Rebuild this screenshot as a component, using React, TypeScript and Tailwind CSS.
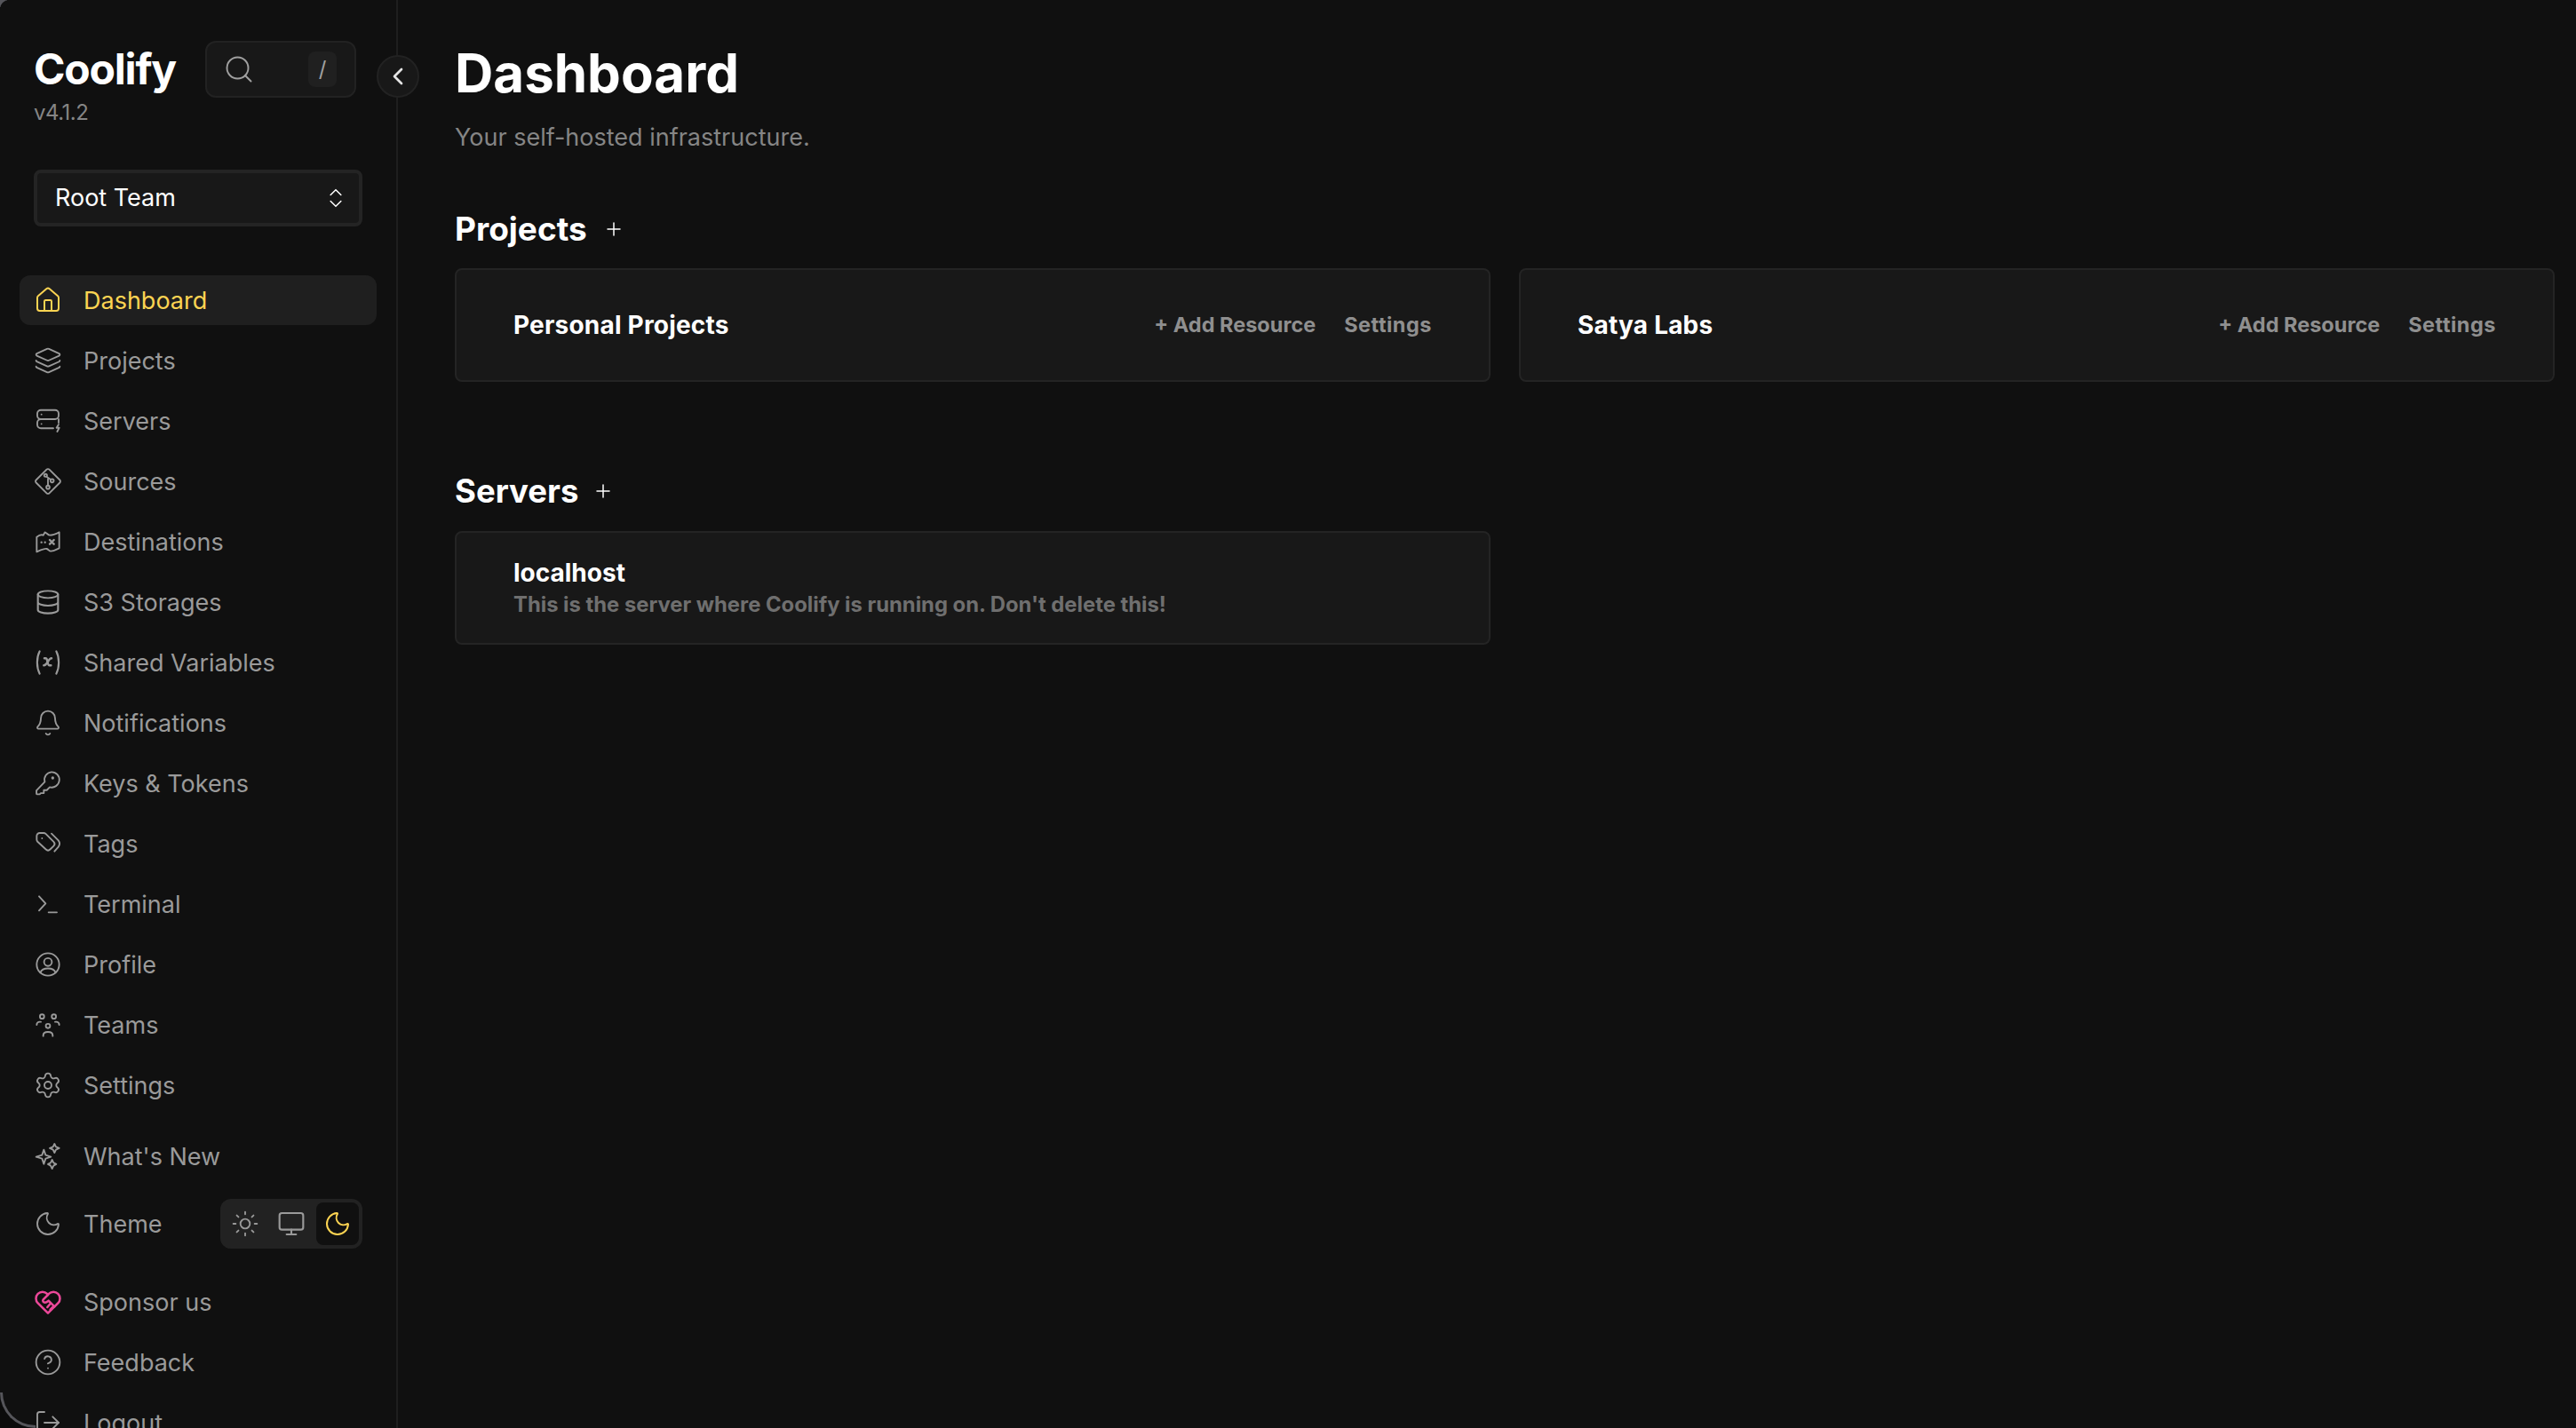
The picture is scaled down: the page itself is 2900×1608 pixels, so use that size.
import React from "react";
import { Search, ChevronLeft, ChevronsUpDown, House, Layers, Bell, Settings, Sun, Moon, Monitor, CircleHelp, Plus, LogOut } from "lucide-react";

function Ic({ children }: { children: React.ReactNode }) {
  return (
    <svg viewBox="0 0 24 24" fill="none" stroke="currentColor" strokeWidth={1.4} strokeLinecap="round" strokeLinejoin="round" className="w-8 h-8">
      {children}
    </svg>
  );
}

const ServersI = () => (
  <Ic>
    <path d="M6 2.800h12a3 3 0 0 1 3 3v1.700a3 3 0 0 1-3 3H6a3 3 0 0 1-3-3V5.800a3 3 0 0 1 3-3Z" />
    <path d="M6 10.500a3 3 0 0 0-3 3v1.700a3 3 0 0 0 3 3h10.500M21 10.500v3" />
    <path d="M21 15l-1.800 2.800h2.300L19.800 21" />
    <path d="M6.500 6.500h.01M6.500 14.500h.01" />
  </Ic>
);
const SourcesI = () => (
  <Ic>
    <path d="M1.500 12c0-.4.200-.8.500-1.100L10.900 2c.6-.6 1.600-.6 2.200 0l8.900 8.900c.6.600.6 1.600 0 2.200L13.100 22c-.6.600-1.600.6-2.200 0L2 13.100c-.3-.3-.5-.7-.5-1.100Z" />
    <circle cx="12" cy="17" r="1.400" />
    <circle cx="10" cy="7" r="1.200" />
    <circle cx="15.500" cy="11.500" r="1.400" />
    <path d="M12 15.500V10M10.800 8l3.500 2.500" />
  </Ic>
);
const DestI = () => (
  <Ic>
    <path d="M2.500 8c2.500-2 4-2.300 5.500-1.500L9.500 4c1.500.5 2.500 2.500 4 2.500 2.500 0 5-1 8-2.500v13.500c-2.500 1-4 2.500-7 2.500-1.500.2-2-1.500-3.500-2-2-.5-5 1-8.500 2.500Z" />
    <path d="M13.500 10.500l3.500 3.500M17 10.500 13.500 14M6.500 12.500h.01M9.500 12.500h.01" strokeWidth={1.8} />
  </Ic>
);
const DbI = () => (
  <Ic>
    <ellipse cx="12" cy="5.500" rx="8.500" ry="3" />
    <path d="M3.500 5.500v13c0 1.700 3.800 3 8.500 3s8.500-1.300 8.500-3v-13M3.500 12c0 1.700 3.800 3 8.500 3s8.500-1.300 8.500-3" strokeWidth={1.6} />
  </Ic>
);
const VarI = () => (
  <Ic>
    <path d="M5 2.500c-2.800 5.500-2.800 13.500 0 19M19 2.500c2.800 5.500 2.800 13.500 0 19" strokeWidth={1.6} />
    <path d="M9 8.500h1c.8 0 1.200 1 1.500 2.500.4 2 .8 3.500 1.800 3.500h1.200M15 8.500c-1.500 0-2.600 2-3.300 3.200-.8 1.300-1.700 2.800-3.200 2.800" strokeWidth={1.9} />
  </Ic>
);
const TermI = () => (
  <Ic>
    <path d="M4.500 5.500l5.500 6-5.500 6M12.500 19h7" />
  </Ic>
);
const TeamsI = () => (
  <Ic>
    <circle cx="7" cy="5" r="1.800" />
    <circle cx="17" cy="5" r="1.800" />
    <circle cx="12" cy="13" r="1.800" />
    <path d="M2.500 12c0-1.300 1-2.500 2.500-2.500h1M21.500 12c0-1.300-1-2.500-2.500-2.500h-1M8 21.500v-.5c0-1.700 1.500-3 4-3s4 1.300 4 3v.5" />
  </Ic>
);
const ProfileI = () => (
  <Ic>
    <circle cx="12" cy="12" r="9.500" />
    <circle cx="12" cy="10" r="3.300" />
    <path d="M5.500 19c1-2.500 3.500-3.600 6.500-3.600s5.500 1.100 6.500 3.600" />
  </Ic>
);
const KeyI = () => (
  <Ic>
    <path d="M15 2.500a6.500 6.500 0 1 1-1.500 12.800l-2.500 2.500H8.500v2.500H6l-1 1H3a.7.700 0 0 1-.7-.7v-2.500l7-7.300A6.500 6.500 0 0 1 15 2.500Z" />
    <path d="M16 7.500h.01" strokeWidth={2.500} />
  </Ic>
);
const TagsI = () => (
  <Ic>
    <path d="M2.500 5.500A2.500 2.500 0 0 1 5 3h3.300a2.500 2.500 0 0 1 1.800.7l6.700 6.700a2.500 2.500 0 0 1 0 3.500l-3 3a2.500 2.500 0 0 1-3.500 0L3.200 10.300a2.500 2.500 0 0 1-.7-1.800Z" />
    <path d="M15 3.500l5.800 5.800a4.500 4.500 0 0 1 0 5.400L17.500 18.500M7 7.500h.01" />
  </Ic>
);
const SparkI = () => (
  <Ic>
    <path d="M8.500 6.500 10 11l4.500 1.500L10 14l-1.500 4.500L7 14l-5-1.500L7 11Z" />
    <path d="M17.500 1.500 18.700 4l2.800 1.200-2.800 1.300-1.200 2.500-1.200-2.500L13.500 5.200 16.300 4Z" />
    <path d="M15.500 15 16.700 17.500l2.300 1.200-2.300 1.300-1.200 2.500-1.200-2.500-2.300-1.300 2.300-1.200Z" />
  </Ic>
);
const Hands = () => (
  <Ic>
    <path d="M12 21.500 3.500 13a5.500 5.500 0 0 1 0-7.800 5.500 5.500 0 0 1 7.800 0l.7.800.7-.8a5.500 5.500 0 0 1 7.800 7.800Z" strokeWidth={1.9} />
    <path d="M12 6 8 10c-.8 1 0 2.500 1.500 2.500 1 0 2-.7 3-1.500l5 5M13.500 14l-2 2.500M16 16.500l-2 2" strokeWidth={1.9} />
  </Ic>
);

const ic = "w-8 h-8";
const navA: [string, React.ReactNode][] = [
  ["Projects", <Layers className={ic} strokeWidth={1.4} />],
  ["Servers", <ServersI />],
  ["Sources", <SourcesI />],
  ["Destinations", <DestI />],
  ["S3 Storages", <DbI />],
  ["Shared Variables", <VarI />],
  ["Notifications", <Bell className={ic} strokeWidth={1.4} />],
  ["Keys & Tokens", <KeyI />],
  ["Tags", <TagsI />],
  ["Terminal", <TermI />],
  ["Profile", <ProfileI />],
  ["Teams", <TeamsI />],
  ["Settings", <Settings className={ic} strokeWidth={1.4} />],
];

function Row({ icon, label, active }: { icon: React.ReactNode; label: string; active?: boolean }) {
  return (
    <div className={"flex items-center gap-6 h-14 rounded-xl pl-4 text-[27px] " + (active ? "bg-[#1f1f1f] text-[#fcd452]" : "text-[#9a9a9a]")}>
      <span className="w-8 h-8 flex items-center justify-center shrink-0">{icon}</span>
      <span className="whitespace-nowrap leading-none">{label}</span>
    </div>
  );
}

function Card({ name }: { name: string }) {
  return (
    <div className="h-[128px] bg-[#181818] border-2 border-[#242424] rounded-lg flex items-center justify-between px-16">
      <span className="text-white font-bold text-[28px] tracking-[0.2px]">{name}</span>
      <div className="flex gap-8 text-[23.500px] font-bold text-[#8f8f8f]">
        <span>+ Add Resource</span>
        <span className="tracking-[0.5px]">Settings</span>
      </div>
    </div>
  );
}

export default function App() {
  return (
    <div className="w-[2900px] h-[1608px] overflow-hidden bg-[#0b0b0b] relative" style={{ fontFamily: "Inter, 'Noto Sans', sans-serif" }}>
      <span className="absolute left-0 top-0 w-2 h-2 bg-[#55555a]" />
      <div className="relative w-full h-full bg-[#101010] rounded-tl-[10px] rounded-bl-[40px] flex overflow-hidden">
        <aside className="w-[448px] shrink-0 h-full border-r-2 border-[#1e1e1e] relative">
          <div className="pl-[38px] pt-[44px] flex gap-[33px] items-start">
            <div>
              <div className="text-white font-bold text-[48px] leading-[68px] tracking-[-1.200px]">Coolify</div>
              <div className="text-[#858585] text-[24px] leading-[30px] tracking-[-0.500px]">v4.1.2</div>
            </div>
            <div className="w-[170px] h-[64px] mt-0.5 rounded-xl border-2 border-[#222222] bg-[#181818] flex items-center justify-between pl-[18px] pr-5 text-[#a0a0a0]">
              <Search className="w-9 h-9" strokeWidth={1.3} />
              <span className="w-8 h-10 rounded-lg bg-[#202020] flex items-center justify-center text-[24px]">/</span>
            </div>
          </div>
          <div className="absolute left-[424px] top-[62px] w-12 h-12 rounded-full border-2 border-[#222222] bg-[#181818] flex items-center justify-center text-[#e5e5e5]">
            <ChevronLeft className="w-8 h-8" strokeWidth={2} />
          </div>
          <div className="ml-[38px] mt-[49px] w-[370px] h-[64px] bg-[#181818] border-4 border-[#242424] rounded-lg flex items-center justify-between pl-5 pr-3 text-white text-[27px]">
            <span>Root Team</span>
            <ChevronsUpDown className="w-7 h-7" strokeWidth={1.3} />
          </div>
          <nav className="mt-[55px] ml-[22px] w-[402px] flex flex-col">
            <Row icon={<House className={ic} strokeWidth={1.5} />} label="Dashboard" active />
            <div className="flex flex-col gap-3 mt-3">
              {navA.map(([l, i]) => <Row key={l} label={l} icon={i} />)}
            </div>
            <div className="mt-[24px]"><Row label="What's New" icon={<SparkI />} /></div>
            <div className="flex items-center justify-between mt-[20px] pr-4 h-14">
              <Row label="Theme" icon={<Moon className={ic} strokeWidth={1.4} />} />
              <div className="flex items-center h-14 w-[160px] rounded-xl bg-[#222222] p-1 text-[#9a9a9a]">
                <span className="flex-1 flex justify-center pr-1"><Sun className={ic} strokeWidth={1.4} /></span>
                <span className="flex-1 flex justify-center pr-1"><Monitor className={ic} strokeWidth={1.6} /></span>
                <span className="w-12 h-12 rounded-lg bg-[#101010] text-[#fcd452] flex items-center justify-center"><Moon className={ic} strokeWidth={1.5} /></span>
              </div>
            </div>
            <div className="mt-[32px] flex flex-col gap-3">
              <Row label="Sponsor us" icon={<span className="text-[#ec4899]"><Hands /></span>} />
              <Row label="Feedback" icon={<CircleHelp className={ic} strokeWidth={1.4} />} />
              <Row label="Logout" icon={<LogOut className={ic} strokeWidth={1.4} />} />
            </div>
          </nav>
        </aside>
        <main className="flex-1 pl-[64px] pr-6">
          <h1 className="text-white font-bold text-[60px] leading-[72px] mt-[46px]">Dashboard</h1>
          <p className="text-[#858585] text-[27px] leading-10 mt-[17px]">Your self-hosted infrastructure.</p>
          <div className="flex items-center gap-[18px] mt-[63px] h-10">
            <h2 className="text-white font-bold text-[37px]">Projects</h2>
            <Plus className="w-6 h-6 text-white" strokeWidth={1.5} />
          </div>
          <div className="grid grid-cols-2 gap-8 mt-[24px]">
            <Card name="Personal Projects" />
            <Card name="Satya Labs" />
          </div>
          <div className="flex items-center gap-4 mt-[103px] h-10">
            <h2 className="text-white font-bold text-[36.500px]">Servers</h2>
            <Plus className="w-6 h-6 text-white" strokeWidth={1.5} />
          </div>
          <div className="grid grid-cols-2 gap-8 mt-[25px]">
            <div className="h-[128px] bg-[#181818] border-2 border-[#242424] rounded-lg flex flex-col justify-center pl-16">
              <span className="text-white font-bold text-[28px] leading-9">localhost</span>
              <span className="text-[#6f6f6f] font-bold text-[23.800px] leading-8 mt-0.5">This is the server where Coolify is running on. Don't delete this!</span>
            </div>
          </div>
        </main>
      </div>
      <span className="absolute left-0 bottom-0 w-10 h-10 border-l-[3px] border-b-[3px] border-[#55555a] rounded-bl-[40px]" />
    </div>
  );
}
